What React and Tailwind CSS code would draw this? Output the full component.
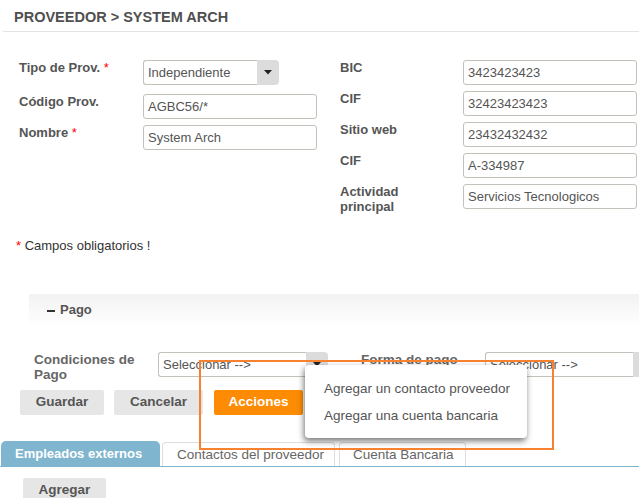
import React from 'react';

const labelCls = 'text-[13px] leading-[15px] font-bold text-[#555]';

function Req() {
  return <span className="text-[#ff0000] font-normal"> *</span>;
}

function TextBox({ value, width = 'w-[174px]' }) {
  return (
    <div
      className={`${width} h-[25px] shrink-0 flex items-center pl-[4px] border border-[#c4c1bb] rounded-[3px] bg-white text-[13px] leading-[15px] text-[#555] whitespace-nowrap overflow-hidden`}
    >
      {value}
    </div>
  );
}

function SelectBox({ value, width }) {
  return (
    <div className={`${width} h-[25px] shrink-0 flex`}>
      <div className="flex-1 flex items-center pl-[4px] border border-r-0 border-[#c4c1bb] rounded-l-[3px] bg-white text-[13px] leading-[15px] text-[#555] whitespace-nowrap overflow-hidden">
        {value}
      </div>
      <div className="w-[22px] bg-[#dcdcdc] rounded-r-[4px] flex items-center justify-center">
        <svg width="8" height="5" viewBox="0 0 8 5">
          <path d="M0 0h8L4 4.5z" fill="#222" />
        </svg>
      </div>
    </div>
  );
}

function Row({ label, children, h = 'h-[31px]', lw = 'w-[124px]' }) {
  return (
    <div className={`flex items-start ${h}`}>
      <div className={`${lw} shrink-0 ${labelCls}`}>{label}</div>
      {children}
    </div>
  );
}

function GrayButton({ children, w }) {
  return (
    <div className={`${w} h-[25px] flex items-center justify-center bg-[#e6e6e6] rounded-[2px] text-[13.5px] font-bold text-[#555]`}>
      {children}
    </div>
  );
}

export default function App() {
  return (
    <div className="relative w-[639px] h-[498px] overflow-hidden bg-white font-['Liberation_Sans',Arial,sans-serif] text-[#555]">
      {/* Title */}
      <div className="h-[32px] ml-[2px] pt-[9px] pl-[12px] border-b border-[#e3e3e3] rounded-bl-[3px] text-[14.5px] leading-[16px] font-bold text-[#4f4f4f]">
        PROVEEDOR &gt; SYSTEM ARCH
      </div>

      {/* Main form */}
      <div className="flex pl-[19px] mt-[28px]">
        <div className="w-[298px] shrink-0">
          <Row label={<>Tipo de Prov.<Req /></>} h="h-[34px]">
            <SelectBox value="Independiente" width="w-[136px]" />
          </Row>
          <Row label="Código Prov.">
            <TextBox value="AGBC56/*" />
          </Row>
          <Row label={<>Nombre<Req /></>}>
            <TextBox value="System Arch" />
          </Row>
        </div>
        <div className="ml-[23px] w-[297px] shrink-0">
          <Row label="BIC" lw="w-[123px]">
            <TextBox value="3423423423" />
          </Row>
          <Row label="CIF" lw="w-[123px]">
            <TextBox value="32423423423" />
          </Row>
          <Row label="Sitio web" lw="w-[123px]">
            <TextBox value="23432432432" />
          </Row>
          <Row label="CIF" lw="w-[123px]">
            <TextBox value="A-334987" />
          </Row>
          <Row label={<>Actividad<br />principal</>} lw="w-[123px]">
            <TextBox value="Servicios Tecnologicos" />
          </Row>
        </div>
      </div>

      <div className="mt-[23px] pl-[16px] text-[13px] leading-[15px] text-[#333]">
        <span className="text-[#ff0000]">*</span> Campos obligatorios !
      </div>

      {/* Pago panel */}
      <div className="mt-[41px] ml-[29px] h-[33px] pt-[8px] pl-[18px] bg-gradient-to-b from-[#f2f2f2] to-white flex items-start">
        <span className="inline-block w-[8px] h-[2px] bg-[#333] mt-[8px] mr-[5px]" />
        <span className="text-[13px] leading-[16px] font-bold text-[#555]">Pago</span>
      </div>

      <div className="flex pl-[34px] mt-[25px] h-[30px]">
        <div className="w-[124px] shrink-0 text-[13.5px] leading-[15px] font-bold text-[#666]">
          Condiciones de<br />Pago
        </div>
        <SelectBox value="Seleccionar -->" width="w-[170px]" />
        <div className="ml-[33px] w-[124px] shrink-0 text-[13.5px] leading-[15px] font-bold text-[#666]">
          Forma de pago
        </div>
        <SelectBox value="Seleccionar -->" width="w-[170px]" />
      </div>

      {/* Buttons */}
      <div className="flex pl-[20px] mt-[8px]">
        <GrayButton w="w-[84px]">Guardar</GrayButton>
        <div className="ml-[10px]">
          <GrayButton w="w-[89px]">Cancelar</GrayButton>
        </div>
        <div className="ml-[11px] w-[89px] h-[25px] flex items-center justify-center bg-[#fd8c04] rounded-[2px] text-[13.5px] font-bold text-white">
          Acciones
        </div>
      </div>

      {/* Tabs */}
      <div className="mt-[26px] flex items-end h-[26px] border-b border-[#7fb5cf]">
        <div className="ml-[1px] w-[159px] h-[25px] flex items-center pl-[14px] bg-[#80b5cf] rounded-t-[5px] text-[13px] leading-[15px] font-bold text-white">
          Empleados externos
        </div>
        <div className="ml-[2px] w-[173px] h-[24px] flex items-center pl-[14px] border border-b-0 border-[#dedede] rounded-t-[4px] text-[13.5px] leading-[15px] text-[#666]">
          Contactos del proveedor
        </div>
        <div className="ml-[4px] w-[127px] h-[24px] flex items-center pl-[13px] border border-b-0 border-[#dedede] rounded-t-[4px] text-[13.5px] leading-[15px] text-[#666]">
          Cuenta Bancaria
        </div>
      </div>

      <div className="ml-[23px] mt-[11px] w-[83px] h-[25px] flex items-center justify-center bg-[#e6e6e6] rounded-[2px] text-[13.5px] font-bold text-[#555]">
        Agregar
      </div>

      {/* Acciones dropdown menu */}
      <div className="absolute left-[305px] top-[365px] w-[222px] h-[73px] pt-[16px] pl-[19px] bg-white rounded-[4px] shadow-[-1px_3px_6px_rgba(0,0,0,0.55)] text-[13.5px] leading-[15px] text-[#555]">
        <div className="h-[26.5px]">Agregar un contacto proveedor</div>
        <div>Agregar una cuenta bancaria</div>
      </div>

      {/* Highlight annotation */}
      <div className="absolute left-[199px] top-[360px] w-[355px] h-[90px] border-2 border-[#f6822f] pointer-events-none" />
    </div>
  );
}
